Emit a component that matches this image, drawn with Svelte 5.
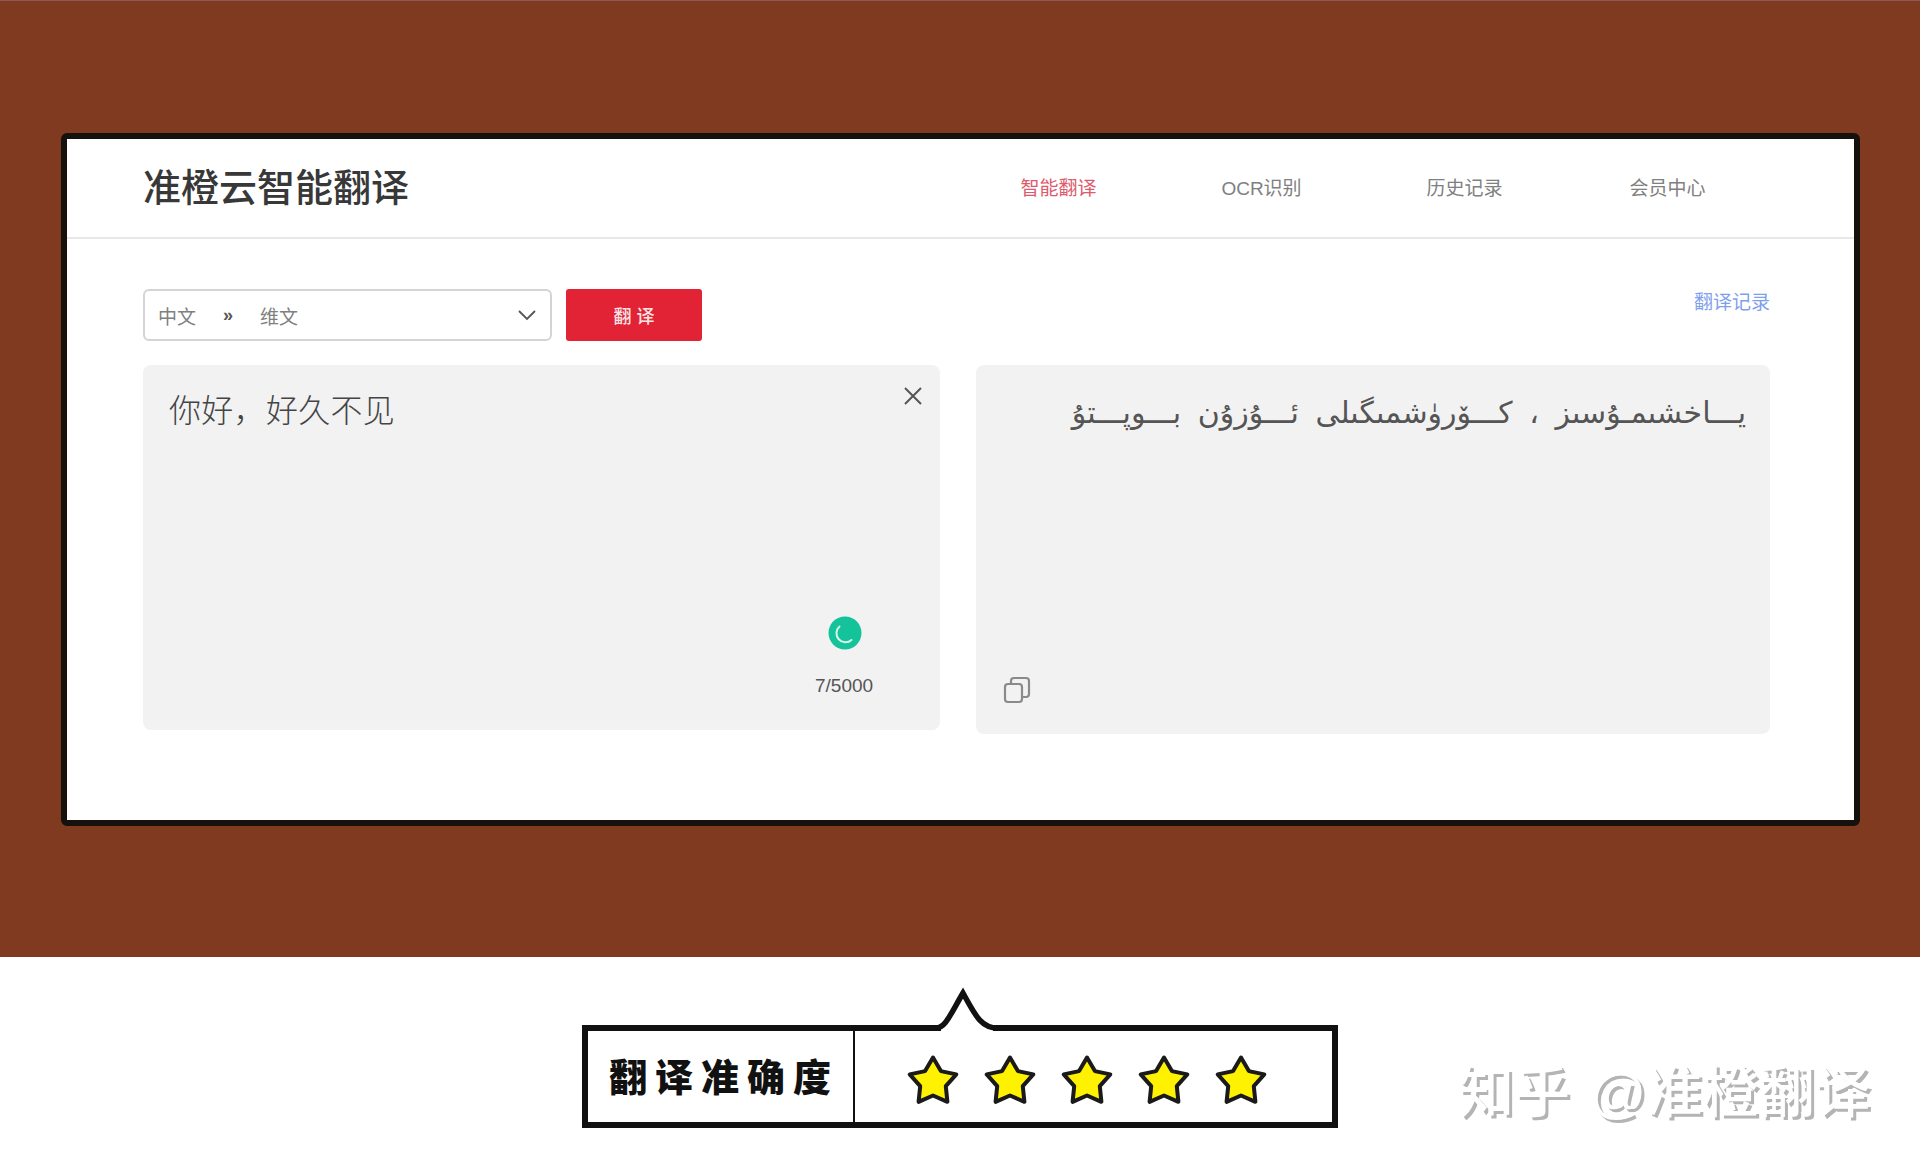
<script lang="ts">
  const navItems = [
    { label: '智能翻译', active: true },
    { label: 'OCR识别', active: false },
    { label: '历史记录', active: false },
    { label: '会员中心', active: false }
  ];

  const stars = [1, 2, 3, 4, 5];

  // five-pointed star, outer radius R, inner radius r
  function starPoints(cx: number, cy: number, R: number, r: number): string {
    const pts: string[] = [];
    for (let i = 0; i < 10; i++) {
      const rad = i % 2 === 0 ? R : r;
      const a = (Math.PI / 5) * i - Math.PI / 2;
      pts.push((cx + rad * Math.cos(a)).toFixed(1) + ',' + (cy + rad * Math.sin(a)).toFixed(1));
    }
    return pts.join(' ');
  }
</script>

<div class="band">
  <div class="card">
    <header class="topbar">
      <div class="logo">准橙云智能翻译</div>
      <nav class="nav">
        {#each navItems as item}
          <span class="nav-item" class:active={item.active}>{item.label}</span>
        {/each}
      </nav>
    </header>

    <div class="content">
      <div class="toolbar">
        <div class="select">
          <span>中文</span>
          <span class="arrows">»</span>
          <span>维文</span>
          <svg class="chevron" width="20" height="12" viewBox="0 0 20 12" fill="none">
            <path d="M2 2l8 8 8-8" stroke="#555" stroke-width="1.8" />
          </svg>
        </div>
        <div class="translate-btn">翻 译</div>
        <span class="records">翻译记录</span>
      </div>

      <div class="panels">
        <div class="panel source">
          <div class="source-text">你好，好久不见</div>
          <svg class="close" width="20" height="20" viewBox="0 0 20 20" fill="none">
            <path d="M2 2l16 16M18 2L2 18" stroke="#555" stroke-width="2" />
          </svg>
          <div class="grammar">
            <svg width="34" height="34" viewBox="0 0 34 34">
              <circle cx="17" cy="17" r="16.5" fill="#15c39a" />
              <path d="M11.5 10.5A8.5 8.5 0 0 0 23.5 24" fill="none" stroke="#d6f5ec" stroke-width="2" stroke-linecap="round" />
            </svg>
          </div>
          <div class="count">7/5000</div>
        </div>
        <div class="panel target">
          <div class="target-text" dir="rtl">يـــاخشىمـۇسىز ، كـــۆرۈشمىگىلى ئـــۇزۇن بـــوپـــتۇ</div>
          <svg class="copy" width="28" height="28" viewBox="0 0 28 28" fill="none" stroke="#8a8a8a" stroke-width="2.2">
            <rect x="2" y="8" width="17" height="18" rx="3" />
            <path d="M8 8V5a3 3 0 0 1 3-3h12a3 3 0 0 1 3 3v13a3 3 0 0 1-3 3h-4" />
          </svg>
        </div>
      </div>
    </div>
  </div>
</div>

<div class="footer">
  <div class="rating">
    <svg class="peak" width="74" height="46" viewBox="0 0 74 46" fill="none">
      <rect x="9" y="36" width="52" height="10" fill="#fff" />
      <path d="M0 41H4C13 41 17 30 31 6C43 28 49 41 66 41H74" stroke="#111" stroke-width="5.5" stroke-miterlimit="10" fill="#fff" />
    </svg>
    <div class="rating-label">翻译准确度</div>
    <div class="rating-stars">
      {#each stars as s (s)}
        <svg width="54" height="52" viewBox="0 0 54 52">
          <polygon points={starPoints(27, 28, 24.5, 13.5)} fill="#fff200" stroke="#1a1a1a" stroke-width="4" stroke-linejoin="round" />
        </svg>
      {/each}
    </div>
  </div>
  <div class="watermark">知乎 @准橙翻译</div>
</div>

<style>
  :global(body) {
    margin: 0;
    background: #fff;
  }

  .band {
    height: 957px;
    box-sizing: border-box;
    padding: 133px 60px 0 61px;
    background: #803a20;
    border-top: 1px solid #8c5a55;
    font-family: "Liberation Sans", "Noto Sans CJK SC", sans-serif;
  }

  .card {
    height: 693px;
    box-sizing: border-box;
    margin-top: -1px;
    border: 6px solid #15120e;
    border-radius: 6px;
    background: #fff;
  }

  .topbar {
    height: 100px;
    box-sizing: border-box;
    display: flex;
    align-items: center;
    justify-content: space-between;
    padding: 0 0 0 76px;
    border-bottom: 2px solid #e8e8e8;
  }

  .logo {
    font-size: 38px;
    font-weight: 500;
    color: #383838;
    white-space: nowrap;
    line-height: 1;
    margin-bottom: 1px;
  }

  .nav {
    display: flex;
    margin-right: 85px;
  }

  .nav-item {
    width: 203px;
    text-align: center;
    font-size: 19px;
    color: #808080;
    white-space: nowrap;
    margin-bottom: 4px;
  }

  .nav-item.active {
    color: #dc5a6c;
  }

  .content {
    padding: 50px 84px 0 76px;
  }

  .toolbar {
    display: flex;
    align-items: flex-start;
    height: 52px;
  }

  .select {
    position: relative;
    width: 409px;
    height: 52px;
    box-sizing: border-box;
    border: 2px solid #d4d4d4;
    border-radius: 6px;
    display: flex;
    align-items: center;
    padding-left: 13px;
    font-size: 19px;
    color: #808080;
  }

  .arrows {
    margin: 0 27px 0 27px;
    color: #555;
    font-weight: 700;
    font-size: 18px;
  }

  .chevron {
    position: absolute;
    right: 13px;
    top: 18px;
  }

  .translate-btn {
    width: 136px;
    height: 52px;
    margin-left: 14px;
    border-radius: 3px;
    background: #e12335;
    color: #fbe4e6;
    font-size: 18px;
    font-weight: 500;
    display: flex;
    align-items: center;
    justify-content: center;
  }

  .records {
    margin-left: auto;
    font-size: 19px;
    line-height: 28px;
    color: #7f9fee;
  }

  .panels {
    display: flex;
    align-items: flex-start;
    margin-top: 24px;
    gap: 36px;
  }

  .panel {
    position: relative;
    box-sizing: border-box;
    background: #f2f2f3;
    border-radius: 8px;
  }

  .source {
    width: 797px;
    height: 365px;
  }

  .target {
    width: 794px;
    height: 369px;
  }

  .source-text {
    padding: 25px 0 0 26px;
    font-size: 32px;
    letter-spacing: 0.3px;
    line-height: 42px;
    font-weight: 300;
    color: #444;
  }

  .close {
    position: absolute;
    top: 21px;
    right: 17px;
  }

  .grammar {
    position: absolute;
    top: 251px;
    left: 685px;
    width: 34px;
    height: 34px;
  }

  .count {
    position: absolute;
    top: 309px;
    left: 672px;
    font-size: 19px;
    line-height: 24px;
    color: #555;
  }

  .target-text {
    padding: 28px 24px 0 0;
    font-family: "DejaVu Sans", sans-serif;
    font-size: 30px;
    word-spacing: 7px;
    line-height: 40px;
    color: #555;
    white-space: nowrap;
  }

  .copy {
    position: absolute;
    left: 27px;
    bottom: 30px;
  }

  .footer {
    display: flex;
    align-items: flex-start;
    padding: 68px 0 0 582px;
    font-family: "Liberation Sans", "Noto Sans CJK SC", sans-serif;
  }

  .rating {
    position: relative;
    width: 756px;
    height: 103px;
    box-sizing: border-box;
    border: 6px solid #111;
    background: #fff;
    display: flex;
  }

  .peak {
    position: absolute;
    left: 344px;
    top: -44px;
  }

  .rating-label {
    width: 267px;
    box-sizing: border-box;
    padding-left: 21px;
    border-right: 2px solid #111;
    font-size: 38px;
    font-weight: 900;
    letter-spacing: 8px;
    line-height: 95px;
    color: #111;
    white-space: nowrap;
  }

  .rating-stars {
    display: flex;
    gap: 23px;
    padding: 23px 0 0 51px;
  }

  .rating-stars svg {
    display: block;
  }

  .watermark {
    margin: 36px 0 0 120px;
    font-size: 56px;
    word-spacing: 4px;
    line-height: 64px;
    font-weight: 500;
    color: #fff;
    text-shadow: 3px 3px 0 #b4b4b4;
    white-space: nowrap;
  }
</style>
